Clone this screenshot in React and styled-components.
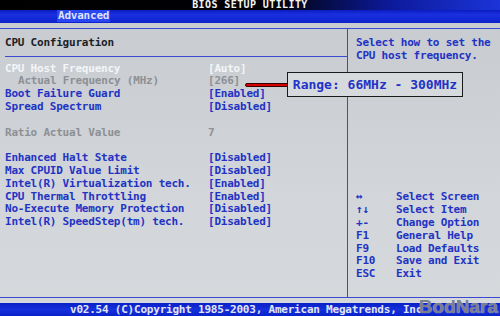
import React from "react";
import styled, { createGlobalStyle } from "styled-components";

const GlobalStyle = createGlobalStyle`
  html, body { margin: 0; padding: 0; background: #cdd0d4; }
`;

const BLUE_TEXT = "#2233c4";
const LINE = "#3a4bd0";

const Screen = styled.div`
  position: relative;
  width: 500px;
  height: 316px;
  display: flex;
  flex-direction: column;
  overflow: hidden;
  font-family: "DejaVu Sans Mono", "Liberation Mono", monospace;
  font-weight: bold;
  font-size: 11px;
  letter-spacing: -0.22px;
`;

const TitleBar = styled.div`
  height: 10px;
  line-height: 10px;
  font-size: 10px;
  text-align: center;
  color: #f4f4f4;
  letter-spacing: 0.4px;
  background: linear-gradient(90deg, #000 0%, #020208 55%, #0c1a9a 78%, #1c34d8 100%);
  overflow: hidden;
`;

const TabBar = styled.div`
  height: 13px;
  display: flex;
  padding-left: 57px;
  background: linear-gradient(180deg, #0b1cc0 0%, #1a30e0 35%, #0d22cc 100%);
`;

const Tab = styled.div`
  height: 12px;
  line-height: 12px;
  padding: 0 1px;
  color: #dfe2ff;
  background: ${(p) => (p.$active ? "#2a46f0" : "transparent")};
`;

const Main = styled.div`
  flex: 1;
  padding-top: 5px;
  padding-bottom: 5px;
  display: flex;
  flex-direction: column;
  background: linear-gradient(180deg, #c8cbd0 0%, #d2d5d9 60%, #d6d9dc 100%);
`;

const Frame = styled.div`
  flex: 1;
  display: flex;
  border-top: 1px solid ${LINE};
  border-bottom: 1px solid ${LINE};
`;

const LeftPane = styled.div`
  width: 337px;
  padding: 8px 5px 0 5px;
  border-right: 1px solid ${LINE};
  box-sizing: content-box;
`;

const RightPane = styled.div`
  flex: 1;
  display: flex;
  flex-direction: column;
  padding: 8px 0 16px 8px;
`;

const Line = styled.div`
  height: 12.8px;
  line-height: 12.8px;
  white-space: pre;
  color: ${(p) => p.$color || BLUE_TEXT};
`;

const Rule = styled.div`
  height: 12.8px;
  display: flex;
  align-items: center;
  margin-right: -5px;
  &::after {
    content: "";
    flex: 1;
    height: 1px;
    background: ${LINE};
  }
`;

const Row = styled.div`
  display: grid;
  grid-template-columns: 203px 1fr;
  height: 12.8px;
  line-height: 12.8px;
  white-space: pre;
  color: ${(p) => p.$color || BLUE_TEXT};
`;

const Label = styled.span`
  padding-left: ${(p) => (p.$indent ? "13px" : "0")};
`;

const Keys = styled.div`
  margin-top: auto;
`;

const KeyRow = styled.div`
  display: grid;
  grid-template-columns: 40px 1fr;
  height: 12.8px;
  line-height: 12.8px;
  color: ${BLUE_TEXT};
`;

const Footer = styled.div`
  height: 13px;
  line-height: 13px;
  padding-left: 70px;
  color: #e2e5f2;
  background: linear-gradient(180deg, #0a20c8 0%, #1530dc 50%, #0a22cc 100%);
  white-space: pre;
`;

const Callout = styled.div`
  position: absolute;
  left: 287px;
  top: 72px;
  width: 174px;
  height: 23px;
  border: 1px solid #1a1a1a;
  background: #d7dadd;
  color: #1f34c6;
  font-size: 13px;
  letter-spacing: 0;
  line-height: 23px;
  text-align: center;
`;

const Pointer = styled.div`
  position: absolute;
  left: 245px;
  top: 83px;
  width: 42px;
  height: 2px;
  background: #d40000;
  border: 1px solid #3a0000;
  border-radius: 2px;
`;

const Watermark = styled.div`
  position: absolute;
  right: 2px;
  bottom: -2px;
  font-family: "Liberation Sans", Arial, sans-serif;
  font-size: 19px;
  font-weight: bold;
  letter-spacing: 0;
  color: rgba(110, 115, 130, 0.9);
  text-shadow: 0 0 1px #dfe2e6;
`;

const rows = [
  { label: "CPU Host Frequency", value: "[Auto]", color: "#f4f5f7" },
  { label: "Actual Frequency (MHz)", value: "[266]", color: "#8d9095", indent: true },
  { label: "Boot Failure Guard", value: "[Enabled]" },
  { label: "Spread Spectrum", value: "[Disabled]" },
  null,
  { label: "Ratio Actual Value", value: "7", color: "#8d9095" },
  null,
  { label: "Enhanced Halt State", value: "[Disabled]" },
  { label: "Max CPUID Value Limit", value: "[Disabled]" },
  { label: "Intel(R) Virtualization tech.", value: "[Enabled]" },
  { label: "CPU Thermal Throttling", value: "[Enabled]" },
  { label: "No-Execute Memory Protection", value: "[Disabled]" },
  { label: "Intel(R) SpeedStep(tm) tech.", value: "[Disabled]" },
];

const keys = [
  ["↔", "Select Screen"],
  ["↑↓", "Select Item"],
  ["+-", "Change Option"],
  ["F1", "General Help"],
  ["F9", "Load Defaults"],
  ["F10", "Save and Exit"],
  ["ESC", "Exit"],
];

export default function App() {
  return (
    <>
      <GlobalStyle />
      <Screen>
        <TitleBar>BIOS SETUP UTILITY</TitleBar>
        <TabBar>
          <Tab $active>Advanced</Tab>
        </TabBar>
        <Main>
          <Frame>
            <LeftPane>
              <Line $color="#1c1f28">CPU Configuration</Line>
              <Rule />
              {rows.map((r, i) =>
                r ? (
                  <Row key={i} $color={r.color}>
                    <Label $indent={r.indent}>{r.label}</Label>
                    <span>{r.value}</span>
                  </Row>
                ) : (
                  <Line key={i} />
                )
              )}
            </LeftPane>
            <RightPane>
              <Line>Select how to set the</Line>
              <Line>CPU host frequency.</Line>
              <Keys>
                {keys.map(([k, d]) => (
                  <KeyRow key={k}>
                    <span>{k}</span>
                    <span>{d}</span>
                  </KeyRow>
                ))}
              </Keys>
            </RightPane>
          </Frame>
        </Main>
        <Footer>v02.54 (C)Copyright 1985-2003, American Megatrends, Inc.</Footer>
        <Pointer />
        <Callout>Range: 66MHz - 300MHz</Callout>
        <Watermark>BodNara</Watermark>
      </Screen>
    </>
  );
}
